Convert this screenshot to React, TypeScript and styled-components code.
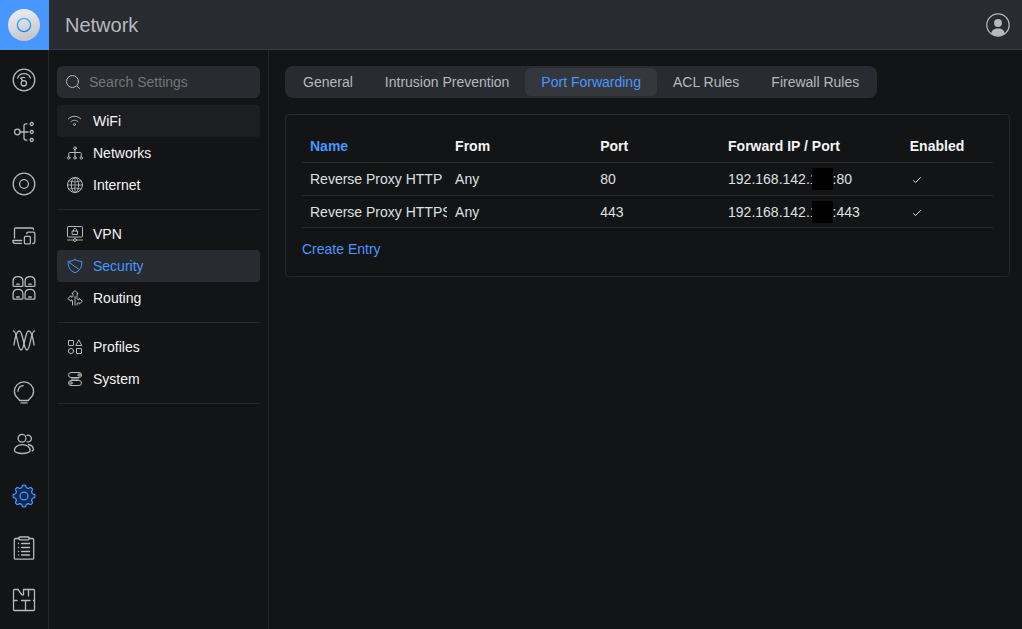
import React from "react";
import styled, { createGlobalStyle } from "styled-components";

const color = {
  bg: "#131416",
  raised: "#282b2f",
  hover: "#1c1e21",
  line: "#26282b",
  tabActive: "#34373c",
  blue: "#4797ff",
  icon: "#b6b9bf",
  title: "#b6b9bf",
  text: "#dee0e3",
  strong: "#f4f5f6",
};

const GlobalStyle = createGlobalStyle`
  *, *::before, *::after { box-sizing: border-box; }
  body {
    margin: 0;
    background: ${color.bg};
    color: ${color.text};
    font: 14px/20px "Liberation Sans", Arial, sans-serif;
  }
  button, input { font: inherit; }
  a { color: inherit; text-decoration: none; }
`;

const Page = styled.div`
  display: flex;
  flex-direction: column;
  min-height: 100vh;
`;

const Header = styled.header`
  display: flex;
  align-items: center;
  height: 50px;
  background: ${color.raised};
`;

const LogoLink = styled.a`
  display: flex;
  align-items: center;
  justify-content: center;
  flex: none;
  width: 49px;
  height: 50px;
  padding-right: 1px;
  background: ${color.blue};
`;

const HeaderBar = styled.div`
  display: flex;
  flex: 1;
  align-items: center;
  justify-content: space-between;
  height: 50px;
  padding: 0 12px 0 16px;
  border-bottom: 1px solid #36393d;
`;

const Title = styled.h1`
  margin: 0;
  color: ${color.title};
  font-size: 20px;
  font-weight: 400;
  line-height: 28px;
`;

const IconButton = styled.button`
  display: flex;
  padding: 0;
  border: 0;
  background: none;
  color: ${color.icon};
`;

const Body = styled.div`
  display: flex;
  flex: 1;
`;

const Rail = styled.nav`
  flex: none;
  width: 49px;
  padding-top: 4px;
  border-right: 1px solid ${color.line};
`;

const RailLink = styled.a<{ $active?: boolean }>`
  display: flex;
  align-items: center;
  justify-content: center;
  height: 52px;
  color: ${(p) => (p.$active ? color.blue : color.icon)};
`;

const Sidebar = styled.aside`
  flex: none;
  width: 220px;
  padding: 16px 8px 0;
  border-right: 1px solid ${color.line};
`;

const SearchBox = styled.label`
  display: flex;
  align-items: center;
  gap: 8px;
  height: 32px;
  margin-bottom: 7px;
  padding: 0 8px;
  border-radius: 6px;
  background: ${color.raised};
  color: ${color.icon};
`;

const SearchInput = styled.input`
  flex: 1;
  min-width: 0;
  padding: 0;
  border: 0;
  outline: 0;
  background: none;
  color: ${color.text};
  &::placeholder { color: #757575; opacity: 1; }
`;

const NavGroup = styled.ul`
  margin: 0 0 8px;
  padding: 0 0 8px;
  border-bottom: 1px solid ${color.line};
  list-style: none;
`;

const NavLink = styled.a<{ $state?: "hover" | "active" }>`
  display: flex;
  align-items: center;
  gap: 10px;
  height: 32px;
  padding: 0 10px;
  border-radius: 4px;
  color: ${(p) => (p.$state === "active" ? color.blue : color.strong)};
  background: ${(p) =>
    p.$state === "active" ? color.raised : p.$state === "hover" ? color.hover : "transparent"};
  svg { color: ${(p) => (p.$state === "active" ? color.blue : color.icon)}; }
`;

const Main = styled.main`
  flex: 1;
  min-width: 0;
  padding: 16px 12px 16px 16px;
`;

const Tabs = styled.div`
  display: flex;
  width: fit-content;
  height: 32px;
  padding: 2px;
  border-radius: 8px;
  background: ${color.raised};
`;

const Tab = styled.button<{ $active?: boolean }>`
  padding: 0 16px;
  border: 0;
  border-radius: 6px;
  background: ${(p) => (p.$active ? color.tabActive : "transparent")};
  color: ${(p) => (p.$active ? color.blue : color.icon)};
  white-space: nowrap;
`;

const Panel = styled.section`
  margin-top: 16px;
  padding: 16px 16px 17px;
  border: 1px solid ${color.line};
  border-radius: 4px;
`;

const Table = styled.table`
  width: 100%;
  table-layout: fixed;
  border-collapse: separate;
  border-spacing: 0;
  text-align: left;
`;

const HeadCell = styled.th<{ $width: string }>`
  width: ${(p) => p.$width};
  height: 32px;
  padding: 0 8px 2px;
  border-bottom: 1px solid ${color.line};
  color: ${color.strong};
  white-space: nowrap;
`;

const SortButton = styled.button`
  display: block;
  padding: 0;
  border: 0;
  background: none;
  color: ${color.blue};
  font-weight: 700;
`;

const Cell = styled.td<{ $flush?: boolean }>`
  height: 33px;
  padding: 0 ${(p) => (p.$flush ? 0 : 8)}px 0 8px;
  border-bottom: 1px solid ${color.line};
  overflow: hidden;
  white-space: nowrap;
  svg { display: block; }
  tr:last-child > & { height: 32px; }
`;

const Redacted = styled.span`
  display: inline-block;
  width: 21px;
  height: 22px;
  margin: -1px 0 -1px -6px;
  border-radius: 1px;
  background: #000;
  vertical-align: top;
`;

const CreateButton = styled.button`
  display: block;
  margin-top: 11px;
  padding: 0;
  border: 0;
  background: none;
  color: ${color.blue};
`;

type IconProps = { size?: number; children: React.ReactNode };

const Icon = ({ size = 24, children }: IconProps) => (
  <svg
    width={size}
    height={size}
    viewBox={`0 0 ${size} ${size}`}
    fill="none"
    stroke="currentColor"
    strokeWidth={size === 24 ? 1.3 : 1}
    strokeLinecap="round"
    strokeLinejoin="round"
    aria-hidden="true"
  >
    {children}
  </svg>
);

const Logo = () => (
  <svg width="32" height="32" viewBox="0 0 32 32" aria-hidden="true">
    <defs>
      <linearGradient id="disc" x1="0" y1="0" x2="0.3" y2="1">
        <stop offset="0" stopColor="#f1f1f4" />
        <stop offset="1" stopColor="#c6c7d0" />
      </linearGradient>
      <linearGradient id="ring" x1="0" y1="0" x2="0" y2="1">
        <stop offset="0" stopColor="#35b8f5" />
        <stop offset="1" stopColor="#1b80f2" />
      </linearGradient>
    </defs>
    <circle cx="16" cy="16" r="16" fill="url(#disc)" />
    <circle cx="16" cy="16" r="6.6" fill="none" stroke="url(#ring)" strokeWidth="1.3" />
  </svg>
);

const Avatar = () => (
  <svg width="24" height="24" viewBox="0 0 24 24" aria-hidden="true">
    <circle cx="12" cy="12" r="11.2" fill="none" stroke="currentColor" strokeWidth="1.2" />
    <circle cx="12" cy="10" r="3.9" fill="currentColor" />
    <path d="M5.2 20.600C5.600 17.200 8 15.400 12 15.400s6.400 1.800 6.800 5.200C17 22.200 14.500 23 12 23s-5-.8-6.800-2.400Z" fill="currentColor" />
  </svg>
);

const camera = (x: number, y: number) => (
  <g transform={`translate(${x} ${y})`}>
    <path d="M.6 5.200C.6 2.500 2.600.6 5.500.6s4.900 1.900 4.900 4.600v4.200c0 .6-.4 1-1 1H1.600c-.6 0-1-.4-1-1ZM4.200 8.200h2.600" />
  </g>
);

/* Eight rounded teeth, traced as a squashed cosine around the centre. */
const gearPath = (() => {
  const pts: string[] = [];
  for (let deg = 0; deg < 360; deg += 3) {
    const a = (deg * Math.PI) / 180;
    const r = 9.8 + 1.2 * Math.tanh(2.2 * Math.cos(8 * a));
    pts.push(`${(12 + r * Math.sin(a)).toFixed(2)} ${(12 - r * Math.cos(a)).toFixed(2)}`);
  }
  return `M${pts.join("L")}Z`;
})();

const railItems = [
  {
    label: "Dashboard",
    icon: (
      <>
        <circle cx="12" cy="12" r="10.800" />
        <path d="M5.600 10C6.600 7.200 9 5.600 12 5.600s5.400 1.600 6.400 4.400" />
        <path d="M8.600 10.300c1.200-.8 2.600-1 4-.7M9.300 10.500l1.400 2.300" />
        <circle cx="11.800" cy="15.300" r="2.700" />
      </>
    ),
  },
  {
    label: "Topology",
    icon: (
      <>
        <circle cx="5.300" cy="12" r="2.800" />
        <path d="M8.100 12h8M15 3.900h-1c-1.400 0-2 .8-2 2v12.200c0 1.200.6 2 2 2h1" />
        <circle cx="19.700" cy="4" r="1.500" />
        <circle cx="19.700" cy="12" r="1.500" />
        <circle cx="19.700" cy="20" r="1.500" />
      </>
    ),
  },
  {
    label: "Devices",
    icon: (
      <>
        <circle cx="12" cy="12" r="10.800" />
        <circle cx="12" cy="12" r="4.400" />
      </>
    ),
  },
  {
    label: "Clients",
    icon: (
      <>
        <path d="M2.500 14V5.200c0-.8.400-1.200 1.200-1.200h16.600c.8 0 1.200.4 1.200 1.200v.4M9.600 16.500H.9v.8c0 1.200.8 2 2 2h6.700" />
        <path d="M14.800 9.800V9.600c0-1 .5-1.500 1.500-1.500h5c1 0 1.500.5 1.500 1.500v8.400c0 1-.5 1.500-1.500 1.500h-.5" />
        <rect x="12.400" y="12.400" width="6" height="7.500" rx="1" />
      </>
    ),
  },
  {
    label: "Ports",
    icon: (
      <>
        {camera(0.5, 0)}
        {camera(12.5, 0)}
        {camera(0.5, 12.8)}
        {camera(12.5, 12.8)}
      </>
    ),
  },
  {
    label: "Radios",
    icon: (
      <>
        <path d="M1.500 3C5.500 3 5.500 22 9 22s4-19 7.500-19c3 0 4.500 6 5.500 14" />
        <path d="M22.500 3C18.500 3 18.500 22 15 22s-4-19-7.500-19C4.500 3 3 9 2 17" />
      </>
    ),
  },
  {
    label: "Insights",
    icon: (
      <>
        <path d="M7.500 20.500C7.500 18.800 2.400 17.200 2.400 11.400 2.400 6 6.700 1.900 12 1.900s9.600 4.100 9.600 9.500c0 5.800-5.100 7.400-5.100 9.100ZM9 22.900h6" />
        <path d="M6 11.200c.2-3 2.200-5.200 5.200-5.500" />
      </>
    ),
  },
  {
    label: "Admins",
    icon: (
      <>
        <circle cx="10" cy="6.300" r="3.900" />
        <path d="M15 3.300c2.500-.6 4.400 1.100 4.400 3.300s-1.900 3.800-4.400 3.200M2.400 18.500c0-3.400 3.400-5.800 7.900-5.800s7.900 2.400 7.900 5.800c0 1.700-4 3-7.900 3s-7.900-1.300-7.900-3Z" />
        <path d="M16.500 12.500c2.900.7 4.800 2.700 4.900 4.900 0 .7-.5 1.100-1.200 1.400" />
      </>
    ),
  },
  {
    label: "Settings",
    active: true,
    icon: (
      <>
        <path d={gearPath} fill="#0a2a52" />
        <circle cx="12" cy="12" r="3.900" />
      </>
    ),
  },
  {
    label: "System Log",
    icon: (
      <>
        <path d="M6.800 2.500H3.500c-.7 0-1.200.5-1.200 1.200v18.200c0 .7.500 1.200 1.200 1.200h17c.7 0 1.200-.5 1.200-1.200V3.700c0-.7-.5-1.200-1.200-1.200h-3.300" />
        <rect x="6.800" y="1" width="10.400" height="2.800" rx="1" />
        <path d="M9.500 7.500h8M9.500 11.500h8M9.500 15.500h8M9.500 19h8M6.500 7.500h.1M6.500 11.500h.1M6.500 15.500h.1M6.500 19h.1" />
      </>
    ),
  },
  {
    label: "Floorplan",
    icon: (
      <>
        <path d="M6 1.500H2.500c-.5 0-1 .5-1 1v19c0 .5.5 1 1 1h19c.5 0 1-.5 1-1v-19c0-.5-.5-1-1-1h-10v5.300H9.900L6 1.500" />
        <path d="M16.500 1.500V8M1.500 12.500h3.500M9.500 12.500h8.500M21.500 12.500h1M13.500 12.500v10" />
      </>
    ),
  },
];

type NavItem = { label: string; state?: "hover" | "active"; icon: React.ReactNode };

const navGroups: NavItem[][] = [
  [
    {
      label: "WiFi",
      state: "hover",
      icon: (
        <>
          <path d="M1.400 5.800c3.300-3.400 8.900-3.400 12.200 0M4 8.700c1.900-2 5.100-2 7 0" />
          <circle cx="7.500" cy="11.500" r="1" />
        </>
      ),
    },
    {
      label: "Networks",
      icon: (
        <>
          <circle cx="8" cy="3.200" r="1.300" />
          <path d="M8 4.500v7.200M1.700 11.700V8.500c0-.6.400-1 1-1h10.600c.6 0 1 .4 1 1v3.200" />
          <circle cx="1.700" cy="12.900" r="1.200" />
          <circle cx="8" cy="12.900" r="1.200" />
          <circle cx="14.300" cy="12.900" r="1.200" />
        </>
      ),
    },
    {
      label: "Internet",
      icon: (
        <>
          <circle cx="8" cy="8" r="7.500" />
          <ellipse cx="8" cy="8" rx="3.700" ry="7.500" />
          <path d="M8 .5v15M.5 8h15M2 3.900c3.500 1.300 8.500 1.300 12 0M2 12.100c3.500-1.300 8.500-1.300 12 0" strokeWidth=".8" />
        </>
      ),
    },
  ],
  [
    {
      label: "VPN",
      icon: (
        <>
          <rect x=".5" y=".5" width="15" height="10.500" rx=".8" />
          <path d="M5.500 5h5v3.500h-5ZM6.500 5V4c0-2 3-2 3 0v1" />
          <path d="M.5 14h5.500M10 14h5.500" strokeWidth="1.500" opacity=".6" />
          <circle cx="8" cy="14" r="1.400" />
        </>
      ),
    },
    {
      label: "Security",
      state: "active",
      icon: (
        <path d="M8 1.500c2 1.300 4.300 1.900 6.800 1.900.4 5.600-1.900 9.600-6.800 11.300C3.100 13 .8 9 1.200 3.400 3.700 3.400 6 2.800 8 1.500ZM2.200 4.500 11.500 11" />
      ),
    },
    {
      label: "Routing",
      icon: (
        <path d="M5.500 15V11c0-.7-.3-1-1-1H4v1.300L.8 8.500 4 5.700V7h1c.7 0 1-.3 1-1V3.600H4.800L8 .7l3.200 2.900H10v4.600c0 1 .4 1.500 1.400 1.500h.8V8.300l3.200 2.900-3.200 2.900v-1.400h-.8c-.9 0-1.400.5-1.400 1.300v1M8 6.500V15" />
      ),
    },
  ],
  [
    {
      label: "Profiles",
      icon: (
        <>
          <rect x="1.500" y="1.500" width="5" height="5" rx=".5" />
          <path d="M12 1.200 14.800 6.500H9.200Z" />
          <circle cx="4" cy="12" r="2.600" />
          <rect x="9.500" y="9.500" width="5" height="5" rx=".5" />
        </>
      ),
    },
    {
      label: "System",
      icon: (
        <>
          <path d="M3.500 6.500h9l-.8 1.500.8 1.500h-9l.8-1.500Z" fill="#6b6d71" stroke="none" />
          <rect x="1.500" y="1.500" width="13" height="5" rx="2.500" />
          <rect x="1.500" y="9.500" width="13" height="5" rx="2.500" />
          <circle cx="12" cy="4" r="1.200" />
          <circle cx="4" cy="12" r="1.200" />
        </>
      ),
    },
  ],
];

const tabs = ["General", "Intrusion Prevention", "Port Forwarding", "ACL Rules", "Firewall Rules"];

const rules = [
  { name: "Reverse Proxy HTTP", from: "Any", port: "80" },
  { name: "Reverse Proxy HTTPS", from: "Any", port: "443" },
];

export default function App() {
  return (
    <Page>
      <GlobalStyle />
      <Header>
        <LogoLink href="#" aria-label="Home">
          <Logo />
        </LogoLink>
        <HeaderBar>
          <Title>Network</Title>
          <IconButton aria-label="Account">
            <Avatar />
          </IconButton>
        </HeaderBar>
      </Header>
      <Body>
        <Rail aria-label="Main">
          {railItems.map((item) => (
            <RailLink key={item.label} href="#" aria-label={item.label} $active={item.active}>
              <Icon>{item.icon}</Icon>
            </RailLink>
          ))}
        </Rail>
        <Sidebar>
          <SearchBox>
            <Icon size={16}>
              <circle cx="7.500" cy="7.500" r="6" />
              <path d="m11.900 11.900 2.600 2.600" />
            </Icon>
            <SearchInput type="text" placeholder="Search Settings" aria-label="Search Settings" />
          </SearchBox>
          <nav aria-label="Settings">
            {navGroups.map((group) => (
              <NavGroup key={group[0].label}>
                {group.map((item) => (
                  <li key={item.label}>
                    <NavLink href="#" $state={item.state}>
                      <Icon size={16}>{item.icon}</Icon>
                      {item.label}
                    </NavLink>
                  </li>
                ))}
              </NavGroup>
            ))}
          </nav>
        </Sidebar>
        <Main>
          <Tabs role="tablist">
            {tabs.map((tab) => {
              const active = tab === "Port Forwarding";
              return (
                <Tab key={tab} role="tab" aria-selected={active} $active={active}>
                  {tab}
                </Tab>
              );
            })}
          </Tabs>
          <Panel>
            <Table>
              <thead>
                <tr>
                  <HeadCell $width="21%">
                    <SortButton>Name</SortButton>
                  </HeadCell>
                  <HeadCell $width="21%">From</HeadCell>
                  <HeadCell $width="18.5%">Port</HeadCell>
                  <HeadCell $width="26.3%">Forward IP / Port</HeadCell>
                  <HeadCell $width="13.2%">Enabled</HeadCell>
                </tr>
              </thead>
              <tbody>
                {rules.map((rule) => (
                  <tr key={rule.name}>
                    <Cell $flush>{rule.name}</Cell>
                    <Cell>{rule.from}</Cell>
                    <Cell>{rule.port}</Cell>
                    <Cell>
                      192.168.142.1<Redacted />:{rule.port}
                    </Cell>
                    <Cell>
                      <svg width="14" height="14" viewBox="0 0 14 14" role="img" aria-label="Enabled">
                        <path d="m3.200 8.400 2.300 2.100 5.200-5.200" fill="none" stroke={color.text} strokeWidth="1" />
                      </svg>
                    </Cell>
                  </tr>
                ))}
              </tbody>
            </Table>
            <CreateButton>Create Entry</CreateButton>
          </Panel>
        </Main>
      </Body>
    </Page>
  );
}
